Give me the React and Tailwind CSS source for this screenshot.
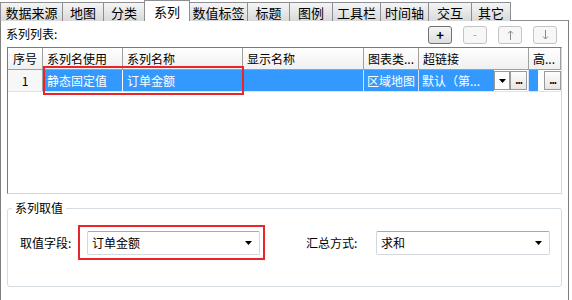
import React from "react";

const tabs = [
  { label: "数据来源", w: "w-[63px]" },
  { label: "地图", w: "w-[42px]" },
  { label: "分类", w: "w-[42px]" },
  { label: "系列", w: "w-[46px]", active: true },
  { label: "数值标签", w: "w-[59px]" },
  { label: "标题", w: "w-[43px]" },
  { label: "图例", w: "w-[44px]" },
  { label: "工具栏", w: "w-[49px]" },
  { label: "时间轴", w: "w-[49px]" },
  { label: "交互", w: "w-[44px]" },
  { label: "其它", w: "w-[40px]" },
];

const cols = [
  { label: "序号", w: "w-[35px]", center: true },
  { label: "系列名使用", w: "w-[80px]" },
  { label: "系列名称", w: "w-[120px]" },
  { label: "显示名称", w: "w-[121px]" },
  { label: "图表类...", w: "w-[55px]" },
  { label: "超链接", w: "w-[110px]" },
  { label: "高...", w: "flex-1" },
];

const Caret = () => (
  <svg width="7" height="4" viewBox="0 0 7 4">
    <path d="M0 0h7L3.5 4z" fill="#000" />
  </svg>
);

const SmallBtn = ({ children, enabled }) => (
  <div
    className={
      enabled
        ? "w-[24px] h-[18px] rounded-[3px] border border-[#707070] bg-linear-to-b from-[#f6f6f6] to-[#dedede] flex items-center justify-center text-black"
        : "w-[24px] h-[18px] rounded-[3px] border border-[#c4c4c4] bg-[#f7f7f7] flex items-center justify-center text-[#9a9a9a]"
    }
  >
    {children}
  </div>
);

const DotsBtn = () => (
  <div className="w-[17px] h-[19px] border border-[#9a9a9a] bg-linear-to-b from-[#fdfdfd] to-[#e6e6e6] flex items-end justify-center pb-[4px]">
    <span className="text-[10px] leading-none font-bold tracking-[-1px]">...</span>
  </div>
);

const Combo = ({ value }) => (
  <div className="h-[24px] flex-1 rounded-[2px] border border-[#d3d8de] border-t-[#a9a9a9] bg-white flex items-center pl-[4px] pr-[7px]">
    <span className="flex-1 text-[12px]">{value}</span>
    <Caret />
  </div>
);

export default function App() {
  return (
    <div className="w-[572px] h-[300px] bg-white overflow-hidden font-['Noto_Sans_CJK_SC','Microsoft_YaHei',sans-serif] text-[12px] text-black leading-none">
      {/* tabs */}
      <div className="relative z-10 flex items-end h-[21px]">
        {tabs.map((t) =>
          t.active ? (
            <div
              key={t.label}
              className={`${t.w} -ml-px h-[21px] border border-b-0 border-[#8c8e94] bg-white flex items-center justify-center text-[13px]`}
            >
              {t.label}
            </div>
          ) : (
            <div
              key={t.label}
              className={`${t.w} -ml-px first:ml-0 h-[19px] border border-b-0 border-[#8c8e94] bg-linear-to-b from-[#f5f5f5] to-[#d9d9d9] flex items-center justify-center text-[13px]`}
            >
              {t.label}
            </div>
          )
        )}
      </div>

      {/* panel */}
      <div className="-mt-px w-[569px] h-[281px] border border-b-0 border-[#8c8e94] border-l-[#7f7f7f] border-r-[#7f7f7f] px-[6px]">
        <div className="h-[26px] flex items-center">
          <span className="flex-1 pl-[-1px] -ml-px">系列列表:</span>
          <div className="flex gap-[11px] mr-[5px] mt-[1px]">
            <SmallBtn enabled>
              <span className="text-[13px] font-bold leading-none">+</span>
            </SmallBtn>
            <SmallBtn>
              <span className="text-[11px] leading-none">-</span>
            </SmallBtn>
            <SmallBtn>
              <svg width="7" height="10" viewBox="0 0 7 10">
                <path d="M3.5 1v9M1 3.5L3.5 1 6 3.5" stroke="#8a8a8a" fill="none" />
              </svg>
            </SmallBtn>
            <SmallBtn>
              <svg width="7" height="10" viewBox="0 0 7 10">
                <path d="M3.5 0v9M1 6.5L3.5 9 6 6.5" stroke="#8a8a8a" fill="none" />
              </svg>
            </SmallBtn>
          </div>
        </div>

        {/* table */}
        <div className="relative h-[147px] border border-t-[#7a7a7a] border-l-[#7a7a7a] border-r-[#d6d6d6] border-b-[#d6d6d6] bg-white">
          <div className="flex h-[22px] border-b border-[#a0a0a0] bg-linear-to-b from-[#ffffff] to-[#f0f0f0]">
            {cols.map((c) => (
              <div
                key={c.label}
                className={`${c.w} border-r border-[#a0a0a0] flex items-center ${c.center ? "justify-center" : "pl-[4px]"} whitespace-nowrap overflow-hidden`}
              >
                {c.label}
              </div>
            ))}
          </div>
          <div className="flex h-[22px] border-b border-[#e3e3e3]">
            <div className="w-[35px] border-r border-[#a0a0a0] bg-[#f7f7f7] flex items-center justify-center">1</div>
            <div className="w-[80px] border-r border-white bg-[#3399ff] text-white flex items-center pl-[4px]">静态固定值</div>
            <div className="w-[120px] border-r border-[#cfe4fb] bg-[#3399ff] text-white flex items-center pl-[4px]">订单金额</div>
            <div className="w-[121px] border-r border-[#cfe4fb] bg-[#3399ff]"></div>
            <div className="w-[55px] border-r border-[#cfe4fb] bg-[#3399ff] text-white flex items-center pl-[3px] whitespace-nowrap overflow-hidden">区域地图</div>
            <div className="w-[110px] border-r border-[#cfe4fb] flex items-center">
              <div className="w-[75px] h-full bg-[#3399ff] text-white flex items-center pl-[3px] whitespace-nowrap overflow-hidden">默认（第...</div>
              <div className="w-[16px] h-[19px] border border-[#9a9a9a] bg-white flex items-center justify-center">
                <Caret />
              </div>
              <DotsBtn />
            </div>
            <div className="flex-1 flex items-center">
              <div className="w-[9px] h-full bg-[#3399ff]"></div>
              <div className="flex-1"></div>
              <DotsBtn />
            </div>
          </div>
          <div className="absolute left-[35px] top-[18px] w-[201px] h-[29px] border-2 border-[#e8262a]"></div>
        </div>

        {/* group box */}
        <div className="relative mt-[14px] h-[79px] rounded-[3px] border border-[#d5dde3] flex items-center pl-[12px] pr-[11px] pb-[9px]">
          <span className="absolute -top-[7px] left-[4px] bg-white px-[3px]">系列取值</span>
          <span className="w-[67px]">取值字段:</span>
          <div className="relative w-[173px] flex">
            <Combo value="订单金额" />
            <div className="absolute -left-[9px] -right-[5px] -top-[6px] -bottom-[5px] border-2 border-[#e8262a]"></div>
          </div>
          <span className="ml-[46px] w-[70px]">汇总方式:</span>
          <Combo value="求和" />
        </div>
      </div>
    </div>
  );
}
